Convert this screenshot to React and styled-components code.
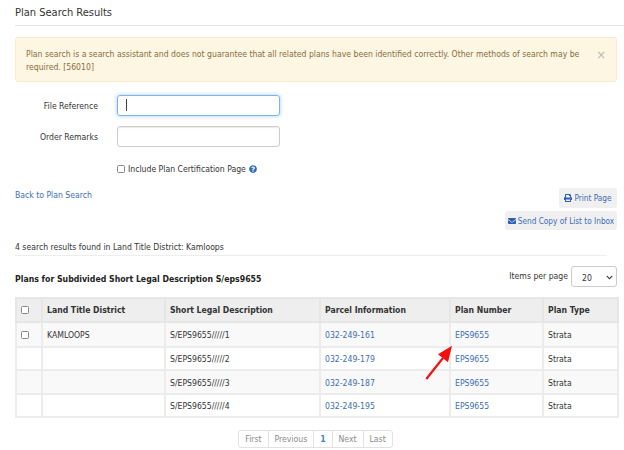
import React from 'react';
import styled, { createGlobalStyle } from 'styled-components';
import { FaPrint, FaEnvelope, FaQuestionCircle, FaChevronDown } from 'react-icons/fa';

const GlobalStyle = createGlobalStyle`
  html, body {
    margin: 0;
    padding: 0;
    background: #fff;
  }
  body {
    font-family: "DejaVu Sans", sans-serif;
    font-stretch: condensed;
    font-size: 8.6px;
    color: #333;
  }
`;

const Page = styled.div`
  position: relative;
  width: 624px;
  height: 450px;
  overflow: hidden;
  padding-left: 15px;
  box-sizing: border-box;
`;

const Title = styled.h1`
  margin: 0;
  height: 25px;
  border-bottom: 1px solid #e5e5e5;
  font-size: 11px;
  font-weight: 400;
  line-height: 26px;
  color: #333;
`;

const Alert = styled.div`
  display: flex;
  justify-content: space-between;
  box-sizing: border-box;
  width: 602px;
  height: 45px;
  margin-top: 11px;
  padding: 10px 10px;
  background: #fdf6e3;
  border: 1px solid #faebcc;
  border-radius: 3px;
  color: #8a6d3b;
  line-height: 13px;
`;

const AlertText = styled.div`
  width: 555px;
`;

const Close = styled.span`
  font-size: 13px;
  line-height: 13px;
  color: #b8b8b0;
`;

const FormRow = styled.div`
  display: flex;
  align-items: center;
  margin-top: ${p => p.$top}px;
`;

const Label = styled.label`
  width: 83px;
  text-align: right;
  margin-right: 19px;
  color: #333;
`;

const Input = styled.div`
  box-sizing: border-box;
  width: 163px;
  height: 21px;
  border: 1px solid ${p => (p.$focus ? '#7fb5e6' : '#ccc')};
  border-radius: 3px;
  box-shadow: ${p => (p.$focus ? '0 0 4px rgba(102, 175, 233, 0.6)' : 'inset 0 1px 1px rgba(0, 0, 0, 0.08)')};
  padding: 3px 8px;
`;

const Caret = styled.div`
  width: 1px;
  height: 12px;
  background: #444;
`;

const CheckRow = styled.div`
  display: flex;
  align-items: center;
  gap: 3px;
  margin: 15px 0 0 102px;
  height: 13px;
`;

const Check = styled.span`
  display: block;
  box-sizing: border-box;
  width: 8px;
  height: 8px;
  border: 1px solid #888;
  border-radius: 1.5px;
  background: #fff;
`;

const BackRow = styled.div`
  display: flex;
  justify-content: space-between;
  align-items: flex-start;
  margin-top: 13px;
  width: 602px;
  height: 43px;
`;

const Link = styled.a`
  color: #3c6eb4;
  text-decoration: none;
`;

const BackLink = styled(Link)`
  margin-top: 2px;
`;

const Actions = styled.div`
  display: flex;
  flex-direction: column;
  align-items: flex-end;
  gap: 3px;
`;

const ActionButton = styled.div`
  display: flex;
  align-items: center;
  justify-content: center;
  gap: 2px;
  box-sizing: border-box;
  height: ${p => p.$h}px;
  width: ${p => p.$w}px;
  background: #f0f0f0;
  border-radius: 3px;
  color: #3c6eb4;
  font-size: 8.2px;
  white-space: nowrap;
  svg {
    color: #2f5fb3;
    font-size: 8px;
  }
`;

const ResultLine = styled.div`
  box-sizing: border-box;
  width: 592px;
  height: 20px;
  margin-top: 5px;
  padding-top: 5px;
  border-bottom: 1px solid #ededed;
  line-height: 13px;
`;

const HeadingRow = styled.div`
  display: flex;
  justify-content: space-between;
  align-items: flex-start;
  width: 602px;
  height: 34px;
  margin-top: 10px;
`;

const Heading = styled.h2`
  margin: 7px 0 0;
  font-size: 8.7px;
  font-weight: 700;
  color: #222;
  line-height: 13px;
`;

const PerPage = styled.div`
  display: flex;
  align-items: center;
  gap: 3px;
`;

const PerPageLabel = styled.span`
  margin-top: -1px;
`;

const Select = styled.div`
  display: flex;
  align-items: center;
  justify-content: space-between;
  box-sizing: border-box;
  width: 46px;
  height: 21px;
  padding: 2px 3px 0 10px;
  border: 1px solid #ccc;
  border-radius: 3px;
  svg {
    font-size: 7px;
    color: #333;
  }
`;

const Table = styled.table`
  width: 602px;
  table-layout: fixed;
  border-collapse: collapse;
  margin-top: -3px;
`;

const Th = styled.th`
  height: 24px;
  padding: 0 4px;
  background: #eee;
  border: 2px solid #e6e6e6;
  text-align: left;
  font-size: 8.6px;
  font-weight: 700;
  color: #333;
  box-sizing: border-box;
`;

const Td = styled.td`
  height: ${p => p.$h}px;
  padding: 1px 4px 0;
  background: ${p => (p.$odd ? '#f9f9f9' : '#fff')};
  border: 2px solid #ececec;
  box-sizing: border-box;
  color: #333;
`;

const Pager = styled.div`
  display: flex;
  justify-content: center;
  width: 602px;
  margin-top: 12px;
`;

const PageItem = styled.div`
  box-sizing: border-box;
  height: 17.5px;
  padding: 0 6px;
  border: 1px solid #e2e2e2;
  margin-left: -1px;
  line-height: 16px;
  color: ${p => (p.$active ? '#3a87c8' : '#8a8a8a')};
  font-weight: ${p => (p.$active ? 700 : 400)};
  &:first-child {
    border-radius: 3px 0 0 3px;
  }
  &:last-child {
    border-radius: 0 3px 3px 0;
  }
`;

// Red arrow drawn over the table
const Arrow = styled.svg`
  position: absolute;
  left: 424px;
  top: 344px;
  width: 29px;
  height: 38px;
`;

const rows = [
  { district: 'KAMLOOPS', legal: 'S/EPS9655/////1', parcel: '032-249-161', h: 25 },
  { legal: 'S/EPS9655/////2', parcel: '032-249-179', h: 23 },
  { legal: 'S/EPS9655/////3', parcel: '032-249-187', h: 24 },
  { legal: 'S/EPS9655/////4', parcel: '032-249-195', h: 23 },
];

const App = () => (
  <Page>
    <GlobalStyle />
    <Title>Plan Search Results</Title>
    <Alert>
      <AlertText>
        Plan search is a search assistant and does not guarantee that all related plans have been identified correctly. Other methods of search may be required. [56010]
      </AlertText>
      <Close>×</Close>
    </Alert>
    <FormRow $top={13}>
      <Label>File Reference</Label>
      <Input $focus><Caret /></Input>
    </FormRow>
    <FormRow $top={10}>
      <Label>Order Remarks</Label>
      <Input />
    </FormRow>
    <CheckRow>
      <Check />
      <span>Include Plan Certification Page</span>
      <FaQuestionCircle color="#2f6db5" size={8} />
    </CheckRow>
    <BackRow>
      <BackLink>Back to Plan Search</BackLink>
      <Actions>
        <ActionButton $w={58} $h={20}><FaPrint /> Print Page</ActionButton>
        <ActionButton $w={112} $h={19}><FaEnvelope /> Send Copy of List to Inbox</ActionButton>
      </Actions>
    </BackRow>
    <ResultLine>4 search results found in Land Title District: Kamloops</ResultLine>
    <HeadingRow>
      <Heading>Plans for Subdivided Short Legal Description S/eps9655</Heading>
      <PerPage>
        <PerPageLabel>Items per page</PerPageLabel>
        <Select>20 <FaChevronDown /></Select>
      </PerPage>
    </HeadingRow>
    <Table>
      <colgroup>
        <col style={{ width: 26 }} />
        <col style={{ width: 123 }} />
        <col style={{ width: 155 }} />
        <col style={{ width: 130 }} />
        <col style={{ width: 93 }} />
        <col style={{ width: 75 }} />
      </colgroup>
      <thead>
        <tr>
          <Th><Check /></Th>
          <Th>Land Title District</Th>
          <Th>Short Legal Description</Th>
          <Th>Parcel Information</Th>
          <Th>Plan Number</Th>
          <Th>Plan Type</Th>
        </tr>
      </thead>
      <tbody>
        {rows.map((row, i) => (
          <tr key={row.legal}>
            <Td $odd={i % 2 === 0} $h={row.h}>{i === 0 && <Check />}</Td>
            <Td $odd={i % 2 === 0} $h={row.h}>{row.district}</Td>
            <Td $odd={i % 2 === 0} $h={row.h}>{row.legal}</Td>
            <Td $odd={i % 2 === 0} $h={row.h}><Link>{row.parcel}</Link></Td>
            <Td $odd={i % 2 === 0} $h={row.h}><Link>EPS9655</Link></Td>
            <Td $odd={i % 2 === 0} $h={row.h}>Strata</Td>
          </tr>
        ))}
      </tbody>
    </Table>
    <Pager>
      <PageItem>First</PageItem>
      <PageItem>Previous</PageItem>
      <PageItem $active>1</PageItem>
      <PageItem>Next</PageItem>
      <PageItem>Last</PageItem>
    </Pager>
    <Arrow viewBox="0 0 29 38">
      <path d="M2.3 35 L19 14" stroke="#f01010" strokeWidth="2.2" fill="none" />
      <path d="M28 1.7 L14 10.3 L24 18.3 Z" fill="#f01010" />
    </Arrow>
  </Page>
);

export default App;
